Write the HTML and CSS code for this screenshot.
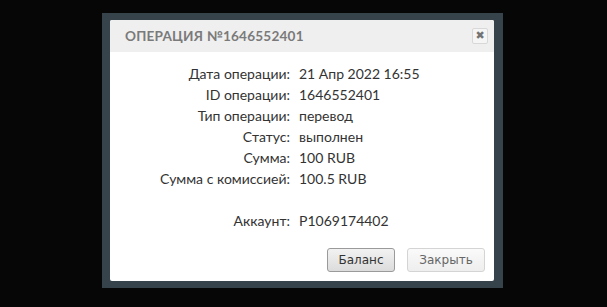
FILE: index.html
```html
<!DOCTYPE html>
<html lang="ru">
<head>
    <meta charset="UTF-8">
    <meta name="viewport" content="width=device-width, initial-scale=1.0">
    <title>Операция</title>
    <link rel="stylesheet" href="styles.css">
</head>
<body>
    <div class="frame">
        <div class="dialog">
            <div class="dialog-head">
                <span class="dialog-title">Операция №1646552401</span>
                <span class="close-x">&#10006;</span>
            </div>
            <div class="dialog-body">
                <div class="row"><span class="label">Дата операции:</span><span class="value">21 Апр 2022 16:55</span></div>
                <div class="row"><span class="label">ID операции:</span><span class="value">1646552401</span></div>
                <div class="row"><span class="label">Тип операции:</span><span class="value">перевод</span></div>
                <div class="row"><span class="label">Статус:</span><span class="value">выполнен</span></div>
                <div class="row"><span class="label">Сумма:</span><span class="value">100 RUB</span></div>
                <div class="row"><span class="label">Сумма с комиссией:</span><span class="value">100.5 RUB</span></div>
                <div class="row empty"></div>
                <div class="row"><span class="label">Аккаунт:</span><span class="value">P1069174402</span></div>
            </div>
            <div class="dialog-foot">
                <button class="btn btn-main">Баланс</button>
                <button class="btn btn-close">Закрыть</button>
            </div>
        </div>
    </div>
</body>
</html>
```
FILE: styles.css
```css
body {
    margin: 0;
    background-color: #060606;
    height: 307px;
    overflow: hidden;
    padding: 13px 0 0 102px;
    box-sizing: border-box;
}

.frame {
    width: 401px;
    height: 275px;
    box-sizing: border-box;
    background-color: #37434a;
    padding: 7px 9px 7px 8px;
}

.dialog {
    background-color: #fff;
    height: 100%;
    display: flex;
    flex-direction: column;
    border-radius: 2px;
}

.dialog-head {
    height: 32px;
    background-color: #efefef;
    display: flex;
    align-items: center;
    justify-content: space-between;
    padding: 0 6px 0 15px;
    border-radius: 2px 2px 0 0;
}

.dialog-title {
    font-family: "Lato", sans-serif;
    font-weight: bold;
    font-size: 13.6px;
    letter-spacing: 0.2px;
    color: #7a7a7a;
    text-transform: uppercase;
}

.close-x {
    width: 16px;
    height: 16px;
    box-sizing: border-box;
    border: 1px solid #d8d8d8;
    border-radius: 2px;
    background-color: #f5f5f5;
    color: #737373;
    font-size: 11px;
    line-height: 14px;
    text-align: center;
    font-family: "DejaVu Sans", sans-serif;
}

.dialog-body {
    padding-top: 11px;
    font-family: "Lato", sans-serif;
    font-size: 14px;
    color: #333;
}

.row {
    display: flex;
    height: 21px;
    align-items: center;
}

.label {
    width: 180px;
    text-align: right;
}

.value {
    margin-left: 9px;
}

.dialog-foot {
    margin-top: auto;
    display: flex;
    justify-content: flex-end;
    gap: 12px;
    padding: 0 9px 9px 0;
}

.btn {
    height: 24px;
    box-sizing: border-box;
    font-family: "DejaVu Sans", sans-serif;
    font-size: 12px;
    border-radius: 3px;
    padding: 0;
}

.btn-main {
    width: 68px;
    border: 1px solid #9a9a9a;
    background: linear-gradient(#f2f2f2, #dcdcdc);
    color: #333;
}

.btn-close {
    width: 78px;
    border: 1px solid #d4d4d4;
    background: linear-gradient(#fafafa, #eeeeee);
    color: #666;
}
```
